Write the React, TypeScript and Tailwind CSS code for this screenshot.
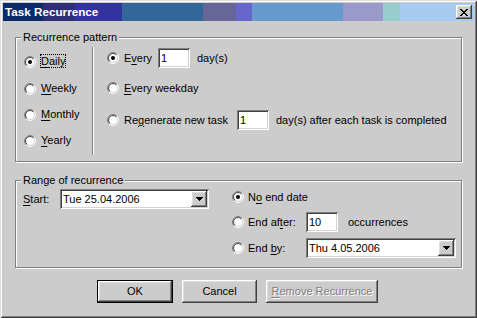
import React from "react";

const RAISED =
  "shadow-[inset_-1px_-1px_0_#404040,inset_1px_1px_0_#ffffff,inset_-2px_-2px_0_#808080,inset_2px_2px_0_#dedede]";
const SUNKEN =
  "shadow-[inset_1px_1px_0_#808080,inset_-1px_-1px_0_#ffffff,inset_2px_2px_0_#404040,inset_-2px_-2px_0_#d4d4d4]";

function U({ children }: { children: React.ReactNode }) {
  return <span className="underline underline-offset-[2px]">{children}</span>;
}

function Radio({ checked }: { checked?: boolean }) {
  const k = 0.7071;
  const tl = (r: number) =>
    `M${6 + r * k} ${6 - r * k} A${r} ${r} 0 0 0 ${6 - r * k} ${6 + r * k}`;
  const br = (r: number) =>
    `M${6 + r * k} ${6 - r * k} A${r} ${r} 0 0 1 ${6 - r * k} ${6 + r * k}`;
  return (
    <svg width="12" height="12" viewBox="0 0 12 12" className="shrink-0">
      <circle cx="6" cy="6" r="5" fill="#ffffff" />
      <path d={br(5.5)} stroke="#ffffff" fill="none" strokeWidth="1" />
      <path d={br(4.5)} stroke="#d4d4d4" fill="none" strokeWidth="1" />
      <path d={tl(5.5)} stroke="#808080" fill="none" strokeWidth="1" />
      <path d={tl(4.5)} stroke="#404040" fill="none" strokeWidth="1" />
      {checked && <circle cx="6" cy="6" r="2" fill="#000000" />}
    </svg>
  );
}

function XGlyph() {
  const rows = ["11000011", "01100110", "00111100", "00011000", "00111100", "01100110", "11000011"];
  return (
    <svg width="8" height="7" viewBox="0 0 8 7" shapeRendering="crispEdges">
      {rows.flatMap((r, y) =>
        r.split("").map((c, x) =>
          c === "1" ? <rect key={`${x}-${y}`} x={x} y={y} width="1" height="1" fill="#000" /> : null
        )
      )}
    </svg>
  );
}

function Arrow() {
  return (
    <svg width="7" height="4" viewBox="0 0 7 4" shapeRendering="crispEdges">
      <rect x="0" y="0" width="7" height="1" fill="#000" />
      <rect x="1" y="1" width="5" height="1" fill="#000" />
      <rect x="2" y="2" width="3" height="1" fill="#000" />
      <rect x="3" y="3" width="1" height="1" fill="#000" />
    </svg>
  );
}

function TextBox({ value, className = "" }: { value: string; className?: string }) {
  return (
    <div className={`h-[20px] w-[32px] bg-white ${SUNKEN} flex items-center pl-[3px] shrink-0 ${className}`}>
      {value}
    </div>
  );
}

function Combo({ value, className = "" }: { value: string; className?: string }) {
  return (
    <div className={`h-[20px] bg-white ${SUNKEN} flex items-center shrink-0 ${className}`}>
      <span className="flex-1 pl-[3px]">{value}</span>
      <div className={`w-[16px] h-[16px] mr-[2px] bg-[#cccccc] ${RAISED} flex items-center justify-center`}>
        <Arrow />
      </div>
    </div>
  );
}

function Group({
  title,
  className = "",
  children,
}: {
  title: string;
  className?: string;
  children: React.ReactNode;
}) {
  return (
    <div
      className={`relative mx-[12px] border border-[#808080] shadow-[inset_1px_1px_0_#ffffff,1px_1px_0_#ffffff] ${className}`}
    >
      <span className="absolute left-[5px] top-[-7px] px-[2px] bg-[#cccccc] leading-[13px]">{title}</span>
      {children}
    </div>
  );
}

function RadioRow({
  checked,
  label,
  className = "",
}: {
  checked?: boolean;
  label: React.ReactNode;
  className?: string;
}) {
  return (
    <div className={`flex items-center h-[13px] ${className}`}>
      <Radio checked={checked} />
      <span className="ml-[5px]">{label}</span>
    </div>
  );
}

function Button({
  children,
  width,
  isDefault,
  disabled,
}: {
  children: React.ReactNode;
  width: string;
  isDefault?: boolean;
  disabled?: boolean;
}) {
  const inner = (
    <div
      className={`h-full w-full bg-[#cccccc] ${RAISED} flex items-center justify-center ${
        disabled ? "text-[#808080] [text-shadow:1px_1px_0_#ffffff]" : ""
      }`}
    >
      {children}
    </div>
  );
  return (
    <div className={`h-[23px] ${width} ${isDefault ? "border border-black" : ""}`}>{inner}</div>
  );
}

export default function App() {
  return (
    <div className="w-[477px] h-[318px] bg-[#cccccc] p-[3px] flex flex-col font-['Liberation_Sans',Arial,sans-serif] text-[11px] leading-[13px] text-black shadow-[inset_1px_1px_0_#dedede,inset_-1px_-1px_0_#404040,inset_2px_2px_0_#ffffff,inset_-2px_-2px_0_#808080]">
      {/* Title bar */}
      <div className="h-[18px] shrink-0 flex items-center justify-between bg-[linear-gradient(to_right,#0c2a6a_0_40px,#2f2f78_40px_72px,#3333a0_72px_119px,#336699_119px_200px,#666699_200px_233px,#6666cc_233px_249px,#6699cc_249px_340px,#9999cc_340px_380px,#99cccc_380px_397px,#a6caf0_397px)]">
        <span className="pl-[2px] text-white font-bold text-[11.7px] leading-[18px]">Task Recurrence</span>
        <div className={`mr-[2px] w-[16px] h-[14px] bg-[#cccccc] ${RAISED} flex items-center justify-center`}>
          <XGlyph />
        </div>
      </div>

      {/* Recurrence pattern */}
      <Group title="Recurrence pattern" className="mt-[16px] h-[125px] flex">
        <div className="w-[76px] pl-[8px] pt-[17px] flex flex-col shrink-0">
          <RadioRow
            checked
            label={
              <span className="[outline:1px_dotted_#000000]">
                <U>D</U>aily
              </span>
            }
          />
          <RadioRow
            className="mt-[14px]"
            label={
              <>
                <U>W</U>eekly
              </>
            }
          />
          <RadioRow
            className="mt-[13px]"
            label={
              <>
                <U>M</U>onthly
              </>
            }
          />
          <RadioRow
            className="mt-[13px]"
            label={
              <>
                <U>Y</U>early
              </>
            }
          />
        </div>
        <div className="mt-[9px] h-[108px] w-[2px] border-l border-[#808080] bg-white shrink-0" />
        <div className="pl-[13px] flex flex-col">
          <div className="mt-[10px] h-[20px] flex items-center">
            <Radio checked />
            <span className="ml-[5px] w-[34px]">
              E<U>v</U>ery
            </span>
            <TextBox value="1" />
            <span className="ml-[7px]">day(s)</span>
          </div>
          <div className="mt-[10px] h-[20px] flex items-center">
            <Radio />
            <span className="ml-[5px]">
              <U>E</U>very weekday
            </span>
          </div>
          <div className="mt-[12px] h-[20px] flex items-center">
            <Radio />
            <span className="ml-[5px] w-[113px]">
              Re<U>g</U>enerate new task
            </span>
            <TextBox value="1" />
            <span className="ml-[7px]">day(s) after each task is completed</span>
          </div>
        </div>
      </Group>

      {/* Range of recurrence */}
      <Group title="Range of recurrence" className="mt-[18px] h-[88px] flex">
        <div className="pl-[7px] pt-[8px] flex items-start shrink-0">
          <div className="h-[20px] w-[37px] flex items-center">
            <span>
              <U>S</U>tart:
            </span>
          </div>
          <Combo value="Tue 25.04.2006" className="w-[149px]" />
        </div>
        <div className="ml-[23px] pt-[6px] flex flex-col">
          <div className="h-[20px] flex items-center">
            <Radio checked />
            <span className="ml-[4px]">
              N<U>o</U> end date
            </span>
          </div>
          <div className="mt-[5px] h-[20px] flex items-center">
            <Radio />
            <span className="ml-[4px] w-[58px]">
              End af<U>t</U>er:
            </span>
            <TextBox value="10" />
            <span className="ml-[10px]">occurrences</span>
          </div>
          <div className="mt-[6px] h-[20px] flex items-center">
            <Radio />
            <span className="ml-[4px] w-[58px]">
              End <U>b</U>y:
            </span>
            <Combo value="Thu 4.05.2006" className="w-[150px]" />
          </div>
        </div>
      </Group>

      {/* Buttons */}
      <div className="mt-[12px] flex justify-center gap-[9px] pr-[2px]">
        <Button width="w-[76px]" isDefault>
          OK
        </Button>
        <Button width="w-[75px]">Cancel</Button>
        <Button width="w-[112px]" disabled>
          <span>
            <U>R</U>emove Recurrence
          </span>
        </Button>
      </div>
    </div>
  );
}
